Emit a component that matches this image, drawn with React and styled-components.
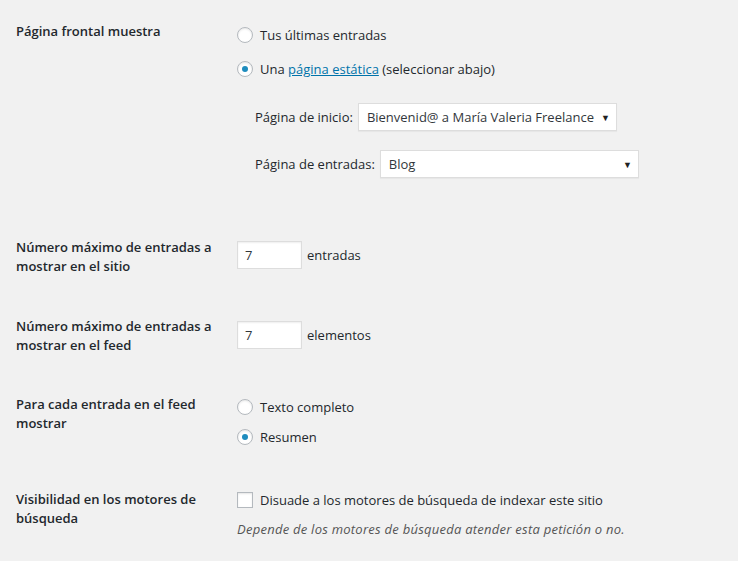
import React from "react";
import styled, { createGlobalStyle } from "styled-components";

const GlobalStyle = createGlobalStyle`
  html, body {
    margin: 0;
    padding: 0;
    background: #f1f1f1;
  }
  body {
    font-family: "Open Sans", "Noto Sans", sans-serif;
    font-size: 13px;
    color: #23282d;
  }
`;

const Page = styled.div`
  width: 738px;
  height: 561px;
  overflow: hidden;
  padding: 22px 0 0 16px;
  box-sizing: border-box;
  background: #f1f1f1;
`;

const Row = styled.div`
  display: grid;
  grid-template-columns: 221px 1fr;
  align-items: start;
  margin-bottom: ${(p) => p.$gap || 0}px;
`;

const Label = styled.div`
  font-weight: 600;
  font-size: 13px;
  line-height: 19px;
  width: 200px;
  padding-top: ${(p) => p.$top || 0}px;
`;

const Control = styled.div`
  display: flex;
  flex-direction: column;
  padding-top: ${(p) => p.$top || 0}px;
`;

const Choice = styled.label`
  display: flex;
  align-items: center;
  gap: 7px;
  height: 20px;
  line-height: 20px;
  margin-bottom: ${(p) => p.$space || 0}px;
`;

const Radio = styled.span`
  width: 14px;
  height: 14px;
  border: 1px solid #b4b9be;
  border-radius: 50%;
  background: #fff;
  box-shadow: inset 0 1px 2px rgba(0, 0, 0, 0.1);
  display: flex;
  align-items: center;
  justify-content: center;
  flex: none;
  &::after {
    content: "";
    display: ${(p) => (p.$checked ? "block" : "none")};
    width: 6px;
    height: 6px;
    border-radius: 50%;
    background: #1e8cbe;
  }
`;

const Checkbox = styled.span`
  width: 14px;
  height: 14px;
  border: 1px solid #b4b9be;
  background: #fff;
  box-shadow: inset 0 1px 2px rgba(0, 0, 0, 0.1);
  flex: none;
`;

const Link = styled.a`
  color: #0073aa;
  text-decoration: underline;
`;

const SelectRow = styled.div`
  display: flex;
  align-items: center;
  gap: 5px;
  padding-left: 18px;
  margin-bottom: ${(p) => p.$space || 0}px;
`;

const Select = styled.div`
  width: 259px;
  height: 28px;
  box-sizing: border-box;
  border: 1px solid #ddd;
  background: #fff;
  box-shadow: 0 1px 1px rgba(0, 0, 0, 0.04);
  display: flex;
  align-items: center;
  justify-content: space-between;
  padding: 0 6px 0 8px;
  font-size: 13px;
  color: #32373c;
  &::after {
    content: "▼";
    font-size: 9px;
    color: #222;
  }
`;

const Inline = styled.div`
  display: flex;
  align-items: center;
  gap: 5px;
`;

const NumberBox = styled.div`
  width: 65px;
  height: 28px;
  box-sizing: border-box;
  border: 1px solid #ddd;
  background: #fff;
  box-shadow: inset 0 1px 2px rgba(0, 0, 0, 0.07);
  padding-left: 7px;
  line-height: 26px;
  color: #32373c;
`;

const Description = styled.p`
  margin: 0;
  font-style: italic;
  color: #555;
  line-height: 20px;
  letter-spacing: 0.25px;
`;

export default function App() {
  return (
    <>
      <GlobalStyle />
      <Page>
        <Row $gap={60}>
          <Label>Página frontal muestra</Label>
          <Control $top={3}>
            <Choice $space={14}>
              <Radio />
              Tus últimas entradas
            </Choice>
            <Choice $space={24}>
              <Radio $checked />
              <span>
                Una <Link href="#">página estática</Link> (seleccionar abajo)
              </span>
            </Choice>
            <SelectRow $space={19}>
              <span>Página de inicio:</span>
              <Select>Bienvenid@ a María Valeria Freelance</Select>
            </SelectRow>
            <SelectRow>
              <span>Página de entradas:</span>
              <Select>Blog</Select>
            </SelectRow>
          </Control>
        </Row>

        <Row $gap={41}>
          <Label>Número máximo de entradas a mostrar en el sitio</Label>
          <Control $top={3}>
            <Inline>
              <NumberBox>7</NumberBox>
              entradas
            </Inline>
          </Control>
        </Row>

        <Row $gap={40}>
          <Label>Número máximo de entradas a mostrar en el feed</Label>
          <Control $top={4}>
            <Inline>
              <NumberBox>7</NumberBox>
              elementos
            </Inline>
          </Control>
        </Row>

        <Row $gap={43}>
          <Label>Para cada entrada en el feed mostrar</Label>
          <Control $top={2}>
            <Choice $space={10}>
              <Radio />
              Texto completo
            </Choice>
            <Choice>
              <Radio $checked />
              Resumen
            </Choice>
          </Control>
        </Row>

        <Row>
          <Label>Visibilidad en los motores de búsqueda</Label>
          <Control $top={0}>
            <Choice $space={9}>
              <Checkbox />
              Disuade a los motores de búsqueda de indexar este sitio
            </Choice>
            <Description>
              Depende de los motores de búsqueda atender esta petición o no.
            </Description>
          </Control>
        </Row>
      </Page>
    </>
  );
}
